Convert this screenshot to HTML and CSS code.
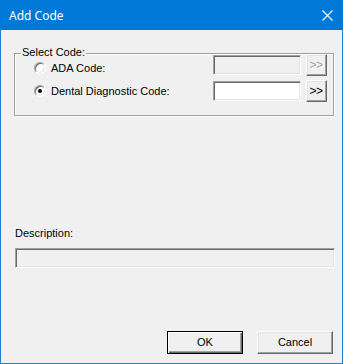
FILE: index.html
```html
<!DOCTYPE html>
<html>
<head>
<meta charset="utf-8">
<link rel="stylesheet" href="styles.css">
</head>
<body>
<div class="window">
  <div class="titlebar">
    <span class="title">Add Code</span>
    <svg class="close" width="11" height="11" viewBox="0 0 11 11"><path d="M0.5 0.5 L10.5 10.5 M10.5 0.5 L0.5 10.5" stroke="#fff" stroke-width="1.1" fill="none"/></svg>
  </div>
  <div class="content">
    <div class="group">
      <span class="group-title">Select Code:</span>
      <div class="radios">
        <label class="radio"><span class="dot"></span><span>ADA Code:</span></label>
        <label class="radio"><span class="dot checked"></span><span>Dental Diagnostic Code:</span></label>
      </div>
      <div class="textbox disabled"></div>
      <div class="btn small disabled">&gt;&gt;</div>
      <div class="textbox"></div>
      <div class="btn small">&gt;&gt;</div>
    </div>
    <div class="desc">
      <div class="desc-label">Description:</div>
      <div class="textbox disabled wide"></div>
    </div>
    <div class="actions">
      <div class="btn action default">OK</div>
      <div class="btn action">Cancel</div>
    </div>
  </div>
</div>
</body>
</html>
```
FILE: styles.css
```css
* { box-sizing: border-box; }
html, body { margin: 0; padding: 0; }
body {
  width: 343px;
  height: 364px;
  font-family: "Liberation Sans", Arial, sans-serif;
  font-size: 11px;
  color: #000;
}
.window {
  width: 343px;
  height: 364px;
  border: 1px solid #1a7fd8;
  display: flex;
  flex-direction: column;
  background: #f0f0f0;
}
.titlebar {
  height: 30px;
  background: #0078d7;
  display: flex;
  align-items: center;
  justify-content: space-between;
  margin: -1px -1px 0 -1px;
  padding: 1px 10px 0 9px;
}
.title {
  font-family: "Noto Sans", "Open Sans", sans-serif;
  font-size: 12px;
  color: #fff;
  line-height: 16px;
}
.close { display: block; }
.content {
  flex: 1;
  display: flex;
  flex-direction: column;
}
.group {
  position: relative;
  margin: 23px 8px 0 13px;
  height: 63px;
  border: 1px solid #a0a0a0;
  box-shadow: 1px 1px 0 #fff, inset 1px 1px 0 #fff;
  padding: 0 6px 0 19px;
  display: grid;
  grid-template-columns: 1fr 88px 21px;
  grid-template-rows: 22px 22px;
  column-gap: 5px;
  row-gap: 4px;
}
.group-title {
  position: absolute;
  top: -8px;
  left: 6px;
  padding: 0 1px;
  line-height: 13px;
  background: #f0f0f0;
}
.radios {
  grid-row: 1 / 3;
  grid-column: 1;
  display: flex;
  flex-direction: column;
  gap: 11px;
  padding-top: 8px;
}
.radio {
  display: flex;
  align-items: center;
  gap: 5px;
  height: 12px;
  line-height: 12px;
}
.dot {
  width: 12px;
  height: 12px;
  border-radius: 50%;
  border: 1px solid;
  border-color: #a0a0a0 #fff #fff #a0a0a0;
  background: #fff;
  box-shadow: inset 1px 1px 0 #696969, inset -1px -1px 0 #e3e3e3;
  display: flex;
  align-items: center;
  justify-content: center;
  flex: none;
}
.dot.checked::after {
  content: "";
  width: 4px;
  height: 4px;
  border-radius: 50%;
  background: #000;
}
.textbox {
  align-self: center;
  height: 20px;
  border: 1px solid;
  border-color: #a0a0a0 #fff #fff #a0a0a0;
  box-shadow: inset 1px 1px 0 #696969, inset -1px -1px 0 #e3e3e3;
  background: #fff;
}
.textbox.disabled { background: #f0f0f0; }
.btn {
  display: flex;
  align-items: center;
  justify-content: center;
  border: 1px solid;
  border-color: #fff #696969 #696969 #fff;
  box-shadow: inset -1px -1px 0 #a0a0a0, inset 1px 1px 0 #e3e3e3;
  background: #f0f0f0;
  line-height: 13px;
}
.btn.small {
  height: 22px;
  font-size: 12px;
  letter-spacing: -0.5px;
  padding-right: 1px;
}
.btn.disabled {
  color: #a0a0a0;
  text-shadow: 1px 1px 0 #fff;
}
.desc {
  margin: auto 7px 0 14px;
  display: flex;
  flex-direction: column;
  gap: 8px;
}
.desc-label { line-height: 13px; }
.textbox.wide { align-self: stretch; }
.actions {
  display: flex;
  justify-content: flex-end;
  gap: 14px;
  margin: 63px 9px 9px 0;
}
.btn.action {
  width: 76px;
  height: 23px;
}
.btn.default {
  border-color: #000;
  box-shadow: inset 1px 1px 0 #fff, inset -1px -1px 0 #696969, inset -2px -2px 0 #a0a0a0;
}
```
